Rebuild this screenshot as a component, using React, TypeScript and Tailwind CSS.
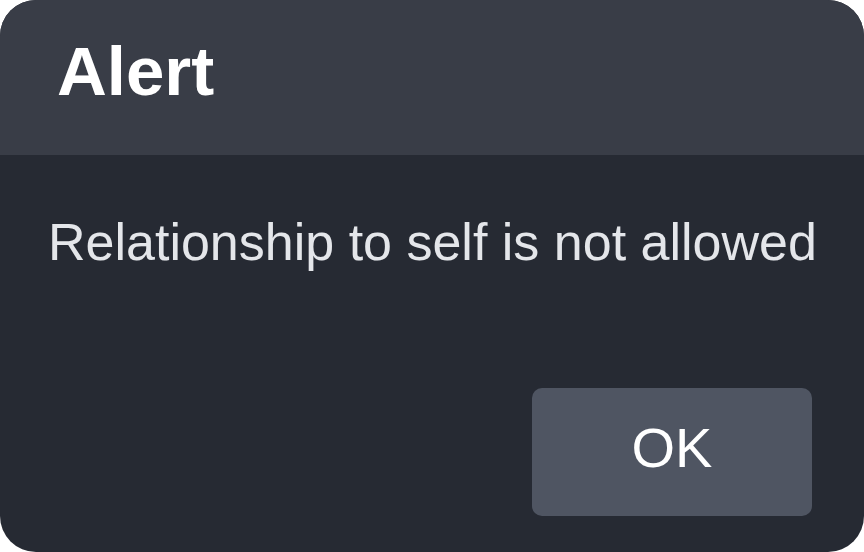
export default function App() {
  return (
    <div className="h-[552px] w-[864px] bg-white" style={{ fontFamily: '"Liberation Sans", Arial, sans-serif' }}>
      <div className="flex h-full w-full flex-col overflow-hidden rounded-[36px] bg-[#262a33]">
        {/* Header */}
        <div className="h-[155px] shrink-0 bg-[#393d47] pl-[57px] pt-[37px]">
          <h1 className="text-[69px] font-bold leading-[69px] text-white">Alert</h1>
        </div>

        {/* Body */}
        <div className="flex flex-1 flex-col pl-[48px] pt-[61px]">
          <p className="text-[52px] leading-[52px] text-[#e4e6ea]">Relationship to self is not allowed</p>
          <div className="mt-auto flex justify-end pb-[36px] pr-[52px]">
            <button
              type="button"
              className="flex h-[128px] w-[280px] items-center justify-center rounded-[10px] bg-[#4f5562] pb-[8px] text-[56px] leading-[56px] text-white"
            >
              OK
            </button>
          </div>
        </div>
      </div>
    </div>
  )
}
